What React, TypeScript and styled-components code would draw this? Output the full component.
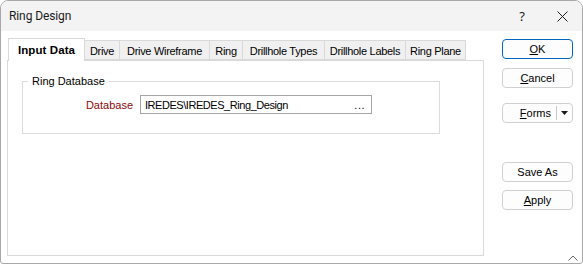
import React from 'react';
import styled, { createGlobalStyle } from 'styled-components';

const GlobalStyle = createGlobalStyle`
    body {
        margin: 0;
        background: #ffffff;
    }
`;

const Window = styled.div`
    width: 583px;
    height: 264px;
    box-sizing: border-box;
    border: 1px solid #a8a8a8;
    border-radius: 8px 8px 3px 3px;
    background: #ffffff;
    overflow: hidden;
    position: relative;
    font-family: 'Liberation Sans', Arial, sans-serif;
    font-size: 11px;
    color: #000000;
`;

const TitleBar = styled.div`
    height: 30px;
    background: #f3f3f3;
    display: flex;
    align-items: center;
    padding-left: 8px;
    h1 {
        flex: 1;
        margin: 0;
        font-family: Roboto, 'Noto Sans', sans-serif;
        font-size: 12px;
        font-weight: 400;
        letter-spacing: -0.1px;
        color: #1b1b1b;
    }
`;

const TitleButton = styled.div`
    width: 40px;
    height: 30px;
    display: flex;
    align-items: center;
    justify-content: center;
    font-family: 'Noto Sans', sans-serif;
    font-size: 13px;
    color: #1b1b1b;
`;

const Body = styled.div`
    display: flex;
    padding: 7px 0 0 6px;
`;

const Main = styled.div`
    width: 477px;
    display: flex;
    flex-direction: column;
`;

const Tabs = styled.div`
    display: flex;
    align-items: flex-end;
    height: 22px;
    padding-left: 1px;
`;

const Tab = styled.div<{ $active?: boolean; $w: number }>`
    box-sizing: border-box;
    width: ${({ $w }) => $w}px;
    height: ${({ $active }) => ($active ? 23 : 20)}px;
    margin-bottom: ${({ $active }) => ($active ? -1 : 0)}px;
    margin-left: ${({ $active }) => ($active ? 0 : -1)}px;
    border: 1px solid #d9d9d9;
    border-bottom: ${({ $active }) => ($active ? 'none' : '1px solid #d9d9d9')};
    background: ${({ $active }) => ($active ? '#ffffff' : '#f0f0f0')};
    font-weight: ${({ $active }) => ($active ? 700 : 400)};
    font-size: ${({ $active }) => ($active ? 11.5 : 11)}px;
    letter-spacing: ${({ $active }) => ($active ? 0.1 : -0.3)}px;
    display: flex;
    align-items: center;
    justify-content: center;
    padding-top: ${({ $active }) => ($active ? 0 : 1)}px;
    white-space: nowrap;
    position: relative;
    z-index: ${({ $active }) => ($active ? 1 : 0)};
    &:first-child {
        margin-left: 0;
    }
`;

const Panel = styled.div`
    box-sizing: border-box;
    height: 196px;
    border: 1px solid #d9d9d9;
    background: #ffffff;
    padding: 14px 43px 0 14px;
`;

const Group = styled.fieldset`
    margin: 0;
    padding: 8px 0 19px 0;
    border: 1px solid #dcdcdc;
    legend {
        margin-left: 5px;
        padding: 0 4px;
        font-size: 11px;
        color: #000000;
    }
`;

const FieldRow = styled.div`
    display: flex;
    align-items: center;
    gap: 7px;
    label {
        width: 110px;
        text-align: right;
        color: #8b0a0a;
    }
`;

const TextBox = styled.div`
    box-sizing: border-box;
    width: 232px;
    height: 19px;
    border: 1px solid #a6a6a6;
    display: flex;
    align-items: center;
    justify-content: space-between;
    padding: 0 6px 0 4px;
    span:first-child {
        letter-spacing: -0.45px;
    }
    span:last-child {
        letter-spacing: 0.5px;
    }
`;

const Side = styled.div`
    display: flex;
    flex-direction: column;
    margin-left: 18px;
    padding-top: 1px;
`;

const Button = styled.div<{ $primary?: boolean; $gap: number }>`
    box-sizing: border-box;
    width: 71px;
    height: 20px;
    margin-top: ${({ $gap }) => $gap}px;
    border: 1px solid ${({ $primary }) => ($primary ? '#0067c0' : '#d0d0d0')};
    border-radius: 4px;
    background: #fdfdfd;
    display: flex;
    align-items: center;
    justify-content: center;
    font-size: 11px;
    u {
        text-decoration: underline;
    }
`;

const SplitButton = styled(Button)`
    justify-content: flex-end;
    padding-right: 0;
    span {
        padding-right: 5px;
    }
`;

const Divider = styled.div`
    width: 1px;
    height: 14px;
    background: #c8c8c8;
`;

const Arrow = styled.div`
    width: 15px;
    display: flex;
    justify-content: center;
`;

const Grip = styled.div`
    position: absolute;
    right: 4px;
    bottom: 6px;
    width: 10px;
    height: 6px;
`;

export default function App() {
    return (
        <>
            <GlobalStyle />
            <Window>
                <TitleBar>
                    <h1>Ring Design</h1>
                    <TitleButton>?</TitleButton>
                    <TitleButton>
                        <svg width="11" height="11" viewBox="0 0 11 11">
                            <path d="M0.5 0.5 L10.5 10.5 M10.5 0.5 L0.5 10.5" stroke="#1b1b1b" strokeWidth="1" />
                        </svg>
                    </TitleButton>
                </TitleBar>
                <Body>
                    <Main>
                        <Tabs>
                            <Tab $active $w={77}>Input Data</Tab>
                            <Tab $w={36}>Drive</Tab>
                            <Tab $w={91}>Drive Wireframe</Tab>
                            <Tab $w={34}>Ring</Tab>
                            <Tab $w={83}>Drillhole Types</Tab>
                            <Tab $w={82}>Drillhole Labels</Tab>
                            <Tab $w={61}>Ring Plane</Tab>
                        </Tabs>
                        <Panel>
                            <Group>
                                <legend>Ring Database</legend>
                                <FieldRow>
                                    <label>Database</label>
                                    <TextBox>
                                        <span>IREDES\IREDES_Ring_Design</span>
                                        <span>...</span>
                                    </TextBox>
                                </FieldRow>
                            </Group>
                        </Panel>
                    </Main>
                    <Side>
                        <Button $primary $gap={0}><span><u>O</u>K</span></Button>
                        <Button $gap={9}><span><u>C</u>ancel</span></Button>
                        <SplitButton $gap={15}>
                            <span><u>F</u>orms</span>
                            <Divider />
                            <Arrow>
                                <svg width="7" height="4" viewBox="0 0 7 4">
                                    <path d="M0 0 L7 0 L3.5 4 Z" fill="#1b1b1b" />
                                </svg>
                            </Arrow>
                        </SplitButton>
                        <Button $gap={39}><span>Save As</span></Button>
                        <Button $gap={8}><span><u>A</u>pply</span></Button>
                    </Side>
                </Body>
                <Grip>
                    <svg width="10" height="6" viewBox="0 0 10 6">
                        <path d="M0.5 5.5 L5 1 L9.5 5.5" stroke="#6a6a6a" strokeWidth="1" fill="none" />
                    </svg>
                </Grip>
            </Window>
        </>
    );
}
